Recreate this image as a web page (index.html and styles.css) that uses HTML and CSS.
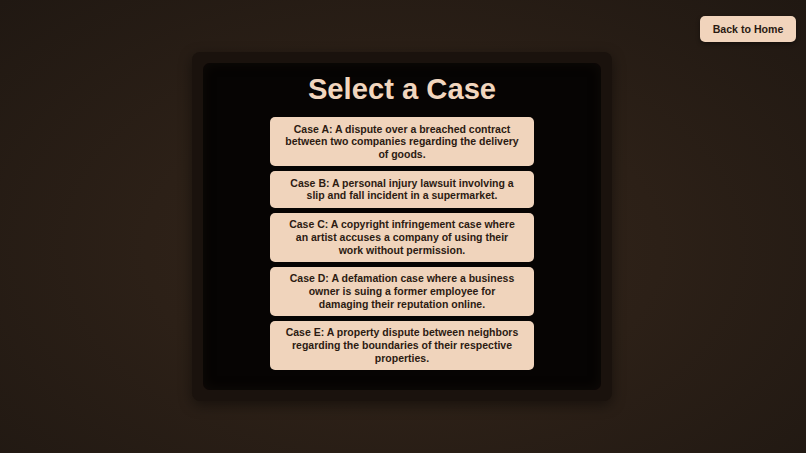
FILE: index.html
```html
<!DOCTYPE html>
<html lang="en">
<head>
<meta charset="utf-8">
<title>Select a Case</title>
<link rel="stylesheet" href="styles.css">
</head>
<body>
<button class="back-btn">Back to Home</button>
<main class="stage">
  <section class="panel">
    <div class="panel-inner">
      <h1 class="title">Select a Case</h1>
      <div class="case-list">
        <button class="case-btn">Case A: A dispute over a breached contract between two companies regarding the delivery of goods.</button>
        <button class="case-btn">Case B: A personal injury lawsuit involving a slip and fall incident in a supermarket.</button>
        <button class="case-btn">Case C: A copyright infringement case where an artist accuses a company of using their work without permission.</button>
        <button class="case-btn">Case D: A defamation case where a business owner is suing a former employee for damaging their reputation online.</button>
        <button class="case-btn">Case E: A property dispute between neighbors regarding the boundaries of their respective properties.</button>
      </div>
    </div>
  </section>
</main>
</body>
</html>
```

FILE: styles.css
```css
* { box-sizing: border-box; }
html, body { height: 100%; }
body {
  margin: 0;
  font-family: "Liberation Sans", Arial, sans-serif;
  background: radial-gradient(ellipse at 50% 55%, #33251b 0%, #2c2017 45%, #201812 100%);
  overflow: hidden;
}
.back-btn {
  position: absolute;
  top: 16px;
  right: 10px;
  width: 96px;
  height: 26px;
  padding: 0;
  border: none;
  border-radius: 5px;
  background: #f1d4bc;
  color: #2a1a12;
  font-family: inherit;
  font-weight: bold;
  font-size: 10.6px;
  box-shadow: 0 2px 4px rgba(0,0,0,0.4);
}
.stage {
  height: 100%;
  display: flex;
  align-items: center;
  justify-content: center;
}
.panel {
  width: 420px;
  padding: 11px;
  background: #1a120d;
  border-radius: 8px;
  box-shadow: 0 4px 14px rgba(0,0,0,0.45);
  margin-left: -2px;
}
.panel-inner {
  background: #060403;
  border-radius: 7px;
  box-shadow: inset 0 0 12px rgba(25,17,12,0.5);
  padding: 10px 0 20px;
  display: flex;
  flex-direction: column;
  align-items: center;
}
.title {
  margin: 0 0 11px;
  font-size: 29.2px;
  line-height: 33px;
  font-weight: bold;
  color: #f1d6be;
  text-align: center;
}
.case-list {
  display: flex;
  flex-direction: column;
  gap: 5.3px;
  width: 264px;
}
.case-btn {
  width: 100%;
  padding: 5.5px 14px;
  border: none;
  border-radius: 5px;
  background: #f0d4bc;
  color: #2c1b12;
  font-family: inherit;
  font-weight: bold;
  font-size: 10.5px;
  line-height: 12.6px;
  text-align: center;
}
```
